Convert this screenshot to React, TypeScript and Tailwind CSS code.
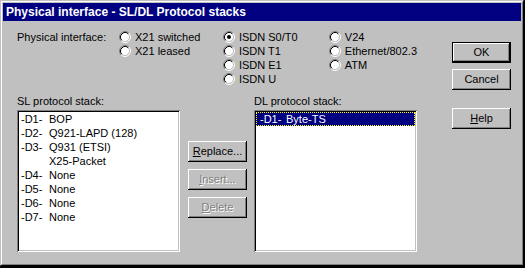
import type { ReactNode } from 'react'

const FONT = "font-['Liberation_Sans',Arial,sans-serif]"

function Radio({ label, checked }: { label: string; checked?: boolean }) {
  return (
    <div className="flex h-[14px] items-center">
      <svg width="12" height="12" viewBox="0 0 12 12" className="shrink-0">
        <circle cx="6" cy="6" r="4.5" fill="#fff" />
        <path d="M2.11 9.89A5.5 5.5 0 0 1 9.89 2.11" stroke="#808080" fill="none" />
        <path d="M9.89 2.11A5.5 5.5 0 0 1 2.11 9.89" stroke="#fff" fill="none" />
        <path d="M2.82 9.18A4.5 4.5 0 0 1 9.18 2.82" stroke="#000" fill="none" />
        <path d="M9.18 2.82A4.5 4.5 0 0 1 2.82 9.18" stroke="#c0c0c0" fill="none" />
        {checked && <circle cx="6" cy="6" r="2" fill="#000" />}
      </svg>
      <span className="ml-[4px] leading-[13px] whitespace-nowrap">{label}</span>
    </div>
  )
}

function Button({ children, isDefault, disabled }: { children: ReactNode; isDefault?: boolean; disabled?: boolean }) {
  const bevel = isDefault
    ? 'shadow-[inset_0_0_0_1px_#000,inset_-2px_-2px_0_#000,inset_2px_2px_0_#fff,inset_-3px_-3px_0_#808080]'
    : 'shadow-[inset_-1px_-1px_0_#000,inset_1px_1px_0_#fff,inset_-2px_-2px_0_#808080]'
  return (
    <div
      className={`flex h-[21px] w-[59px] items-center justify-center bg-[#c0c0c0] leading-[13px] ${bevel} ${
        disabled ? 'text-[#808080] [text-shadow:1px_1px_0_#fff]' : 'text-black'
      }`}
    >
      {children}
    </div>
  )
}

function ListBox({ children }: { children: ReactNode }) {
  return (
    <div className="h-[142px] w-[163px] bg-white p-[2px] shadow-[inset_1px_1px_0_#808080,inset_-1px_-1px_0_#fff,inset_2px_2px_0_#000,inset_-2px_-2px_0_#c0c0c0]">
      {children}
    </div>
  )
}

const slItems = [
  ['-D1-', 'BOP'],
  ['-D2-', 'Q921-LAPD (128)'],
  ['-D3-', 'Q931 (ETSI)'],
  ['', 'X25-Packet'],
  ['-D4-', 'None'],
  ['-D5-', 'None'],
  ['-D6-', 'None'],
  ['-D7-', 'None'],
]

export default function App() {
  return (
    <div className={`h-[268px] w-[525px] bg-black text-[11px] text-black ${FONT}`}>
      {/* window frame */}
      <div className="h-[266px] w-[524px] border border-t-[#c0c0c0] border-l-[#c0c0c0] border-r-black border-b-black">
        <div className="h-full w-full border border-t-white border-l-white border-r-[#808080] border-b-[#808080] bg-[#c0c0c0]">
          {/* title bar */}
          <div className="p-px pb-0">
            <div className="flex h-[18px] items-center bg-[#000080] pl-[3px] text-[12px] font-bold text-white">
              Physical interface - SL/DL Protocol stacks
            </div>
          </div>

          <div className="flex pl-[15px] pt-[9px]">
            <div className="w-[400px]">
              {/* physical interface radios */}
              <div className="flex">
                <div className="flex h-[14px] w-[105px] items-center leading-[13px]">Physical interface:</div>
                <div className="w-[107px]">
                  <Radio label="X21 switched" />
                  <Radio label="X21 leased" />
                </div>
                <div className="w-[109px]">
                  <Radio label="ISDN S0/T0" checked />
                  <Radio label="ISDN T1" />
                  <Radio label="ISDN E1" />
                  <Radio label="ISDN U" />
                </div>
                <div>
                  <Radio label="V24" />
                  <Radio label="Ethernet/802.3" />
                  <Radio label="ATM" />
                </div>
              </div>

              {/* protocol stacks */}
              <div className="mt-[9px] flex">
                <div>
                  <div className="mb-[2px] leading-[13px]">SL protocol stack:</div>
                  <ListBox>
                    {slItems.map(([tag, name], i) => (
                      <div key={i} className="flex h-[14px] items-center pl-[2px] leading-[13px]">
                        <span className="w-[28px] shrink-0">{tag}</span>
                        <span>{name}</span>
                      </div>
                    ))}
                  </ListBox>
                </div>

                <div className="ml-[8px] flex flex-col gap-[7px] pt-[46px]">
                  <Button>
                    <span><u>R</u>eplace...</span>
                  </Button>
                  <Button disabled>
                    <span><u>I</u>nsert...</span>
                  </Button>
                  <Button disabled>
                    <span><u>D</u>elete</span>
                  </Button>
                </div>

                <div className="ml-[7px]">
                  <div className="mb-[2px] leading-[13px]">DL protocol stack:</div>
                  <ListBox>
                    <div className="flex h-[14px] items-center border border-dotted border-[#ffff00] bg-[#000080] pl-[3px] leading-[13px] text-white">
                      <span className="w-[26px] shrink-0">-D1-</span>
                      <span>Byte-TS</span>
                    </div>
                  </ListBox>
                </div>
              </div>
            </div>

            {/* dialog buttons */}
            <div className="ml-[35px] mt-[12px] flex flex-col">
              <Button isDefault>OK</Button>
              <div className="mt-[6px]">
                <Button>Cancel</Button>
              </div>
              <div className="mt-[18px]">
                <Button>
                  <span><u>H</u>elp</span>
                </Button>
              </div>
            </div>
          </div>
        </div>
      </div>
    </div>
  )
}
